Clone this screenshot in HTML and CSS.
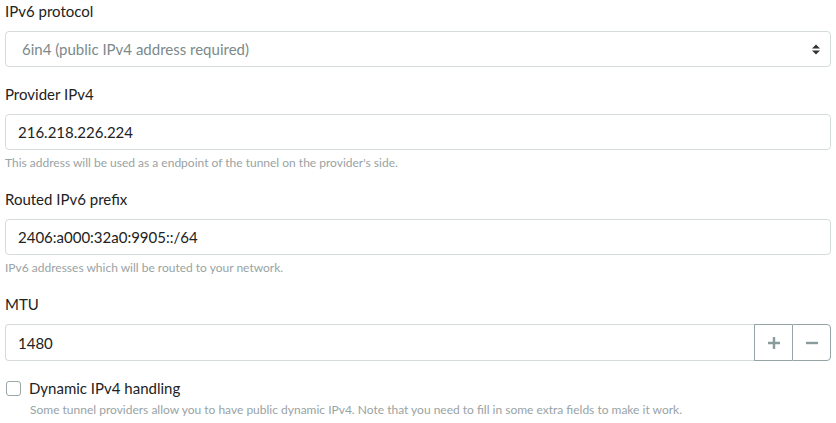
FILE: index.html
```html
<!DOCTYPE html>
<html>
<head>
<meta charset="utf-8">
<link rel="stylesheet" href="styles.css">
</head>
<body>
<form class="form">
  <div class="group">
    <label class="label">IPv6 protocol</label>
    <div class="select">
      <span class="select-text">6in4 (public IPv4 address required)</span>
      <svg class="chev" width="8" height="11" viewBox="0 0 8 11"><path d="M0 4.5 L4 0.5 L8 4.5 Z M0 6.5 L4 10.5 L8 6.5 Z" fill="#333"/></svg>
    </div>
  </div>
  <div class="group">
    <label class="label">Provider IPv4</label>
    <input class="input" type="text" value="216.218.226.224">
    <div class="help">This address will be used as a endpoint of the tunnel on the provider's side.</div>
  </div>
  <div class="group">
    <label class="label">Routed IPv6 prefix</label>
    <input class="input" type="text" value="2406:a000:32a0:9905::/64">
    <div class="help">IPv6 addresses which will be routed to your network.</div>
  </div>
  <div class="group">
    <label class="label">MTU</label>
    <div class="input-group">
      <input class="input input-num" type="text" value="1480">
      <button type="button" class="btn btn-plus"><svg width="14" height="14" viewBox="0 0 14 14"><path d="M7 1v12M1 7h12" stroke="#8a9b9b" stroke-width="2.4"/></svg></button>
      <button type="button" class="btn btn-minus"><svg width="14" height="14" viewBox="0 0 14 14"><path d="M1 7h12" stroke="#8a9b9b" stroke-width="2.4"/></svg></button>
    </div>
  </div>
  <div class="group">
    <div class="check-row">
      <span class="checkbox"></span>
      <span class="check-label">Dynamic IPv4 handling</span>
    </div>
    <div class="help help-check">Some tunnel providers allow you to have public dynamic IPv4. Note that you need to fill in some extra fields to make it work.</div>
  </div>
</form>
</body>
</html>
```

FILE: styles.css
```css
* { box-sizing: border-box; }
html, body {
  margin: 0;
  padding: 0;
  background: #fff;
}
body {
  font-family: Lato, "Open Sans", sans-serif;
  color: #222;
}
.form {
  padding: 0 5px 0 5px;
}
.group {
  margin-bottom: 16px;
}
.label {
  display: block;
  font-size: 15px;
  line-height: 22px;
  height: 22px;
  margin-bottom: 9px;
  color: #222;
}
.select {
  display: flex;
  align-items: center;
  justify-content: space-between;
  height: 36px;
  border: 1px solid #d5dbdb;
  border-radius: 4px;
  padding: 0 10px 0 16px;
  font-size: 15px;
  color: #7b8a8b;
}
.chev {
  display: block;
}
.input {
  display: block;
  width: 100%;
  height: 36px;
  border: 1px solid #d5dbdb;
  border-radius: 4px;
  padding: 0 12px;
  font-family: Lato, "Open Sans", sans-serif;
  font-size: 15px;
  color: #222;
  background: #fff;
  outline: none;
}
.help {
  font-size: 12px;
  line-height: 18px;
  margin-top: 4px;
  color: #99a3a4;
}
.input-group {
  display: flex;
  height: 37px;
}
.input-num {
  flex: 1;
  height: 37px;
  border-radius: 4px 0 0 4px;
  border-right: none;
}
.btn {
  width: 38px;
  height: 37px;
  border: 1px solid #95a5a6;
  background: #fff;
  padding: 0;
  display: flex;
  align-items: center;
  justify-content: center;
  margin: 0;
}
.btn-plus {
  border-right: none;
  width: 38px;
}
.btn-minus {
  border-radius: 0 4px 4px 0;
  width: 39px;
}
.check-row {
  display: flex;
  align-items: center;
  height: 22px;
}
.checkbox {
  width: 15px;
  height: 15px;
  border: 1px solid #9aa6a7;
  border-radius: 3px;
  margin-left: 1px;
  margin-right: 8px;
  margin-top: 1px;
}
.check-label {
  font-size: 15px;
  color: #222;
}
.help-check {
  margin-left: 25px;
  margin-top: 2px;
}
```
